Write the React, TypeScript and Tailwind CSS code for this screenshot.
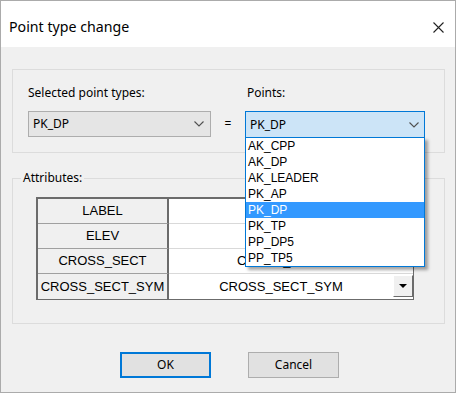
import React from "react";

const points = ["AK_CPP", "AK_DP", "AK_LEADER", "PK_AP", "PK_DP", "PK_TP", "PP_DP5", "PP_TP5"];

const rows = [
  { name: "LABEL", value: "" },
  { name: "ELEV", value: "" },
  { name: "CROSS_SECT", value: "CROSS_SECT" },
  { name: "CROSS_SECT_SYM", value: "CROSS_SECT_SYM", button: true },
];

function Chevron() {
  return (
    <svg width="10" height="6" viewBox="0 0 10 6" className="shrink-0">
      <polyline points="0.5,0.5 5,5 9.5,0.5" fill="none" stroke="#505050" strokeWidth="1.1" />
    </svg>
  );
}

export default function App() {
  return (
    <div className="w-[456px] h-[393px] border border-[#ababab] bg-[#f0f0f0] flex flex-col text-black font-['Noto_Sans',sans-serif]">
      {/* title bar */}
      <div className="h-[46px] shrink-0 bg-white flex items-center justify-between pl-[8px] pr-[11px] pt-[6px]">
        <span className="text-[14.2px]">Point type change</span>
        <svg width="11" height="11" viewBox="0 0 11 11">
          <path d="M0.5 0.5 L10.5 10.5 M10.5 0.5 L0.5 10.5" stroke="#222" strokeWidth="1.1" />
        </svg>
      </div>

      {/* type selection group */}
      <div className="ml-[11px] mt-[22px] w-[433px] h-[84px] border border-[#dcdcdc] pl-[15px] pt-[15px] flex">
        <div className="w-[183px]">
          <div className="h-[16px] leading-[16px] text-[12px]">Selected point types:</div>
          <div className="mt-[10px] h-[26px] border border-[#adadad] bg-[#e5e5e5] flex items-center justify-between pl-[4px] pr-[6px] text-[12px]">
            <span>PK_DP</span>
            <Chevron />
          </div>
        </div>
        <div className="w-[34px] flex flex-col">
          <div className="h-[26px]" />
          <div className="h-[26px] flex items-center justify-center text-[12px]">=</div>
        </div>
        <div className="w-[180px]">
          <div className="h-[16px] leading-[16px] text-[12px] pl-[2px]">Points:</div>
          <div className="relative mt-[10px]">
            <div className="h-[27px] border border-[#0078d7] bg-[#cce4f7] flex items-center justify-between pl-[4px] pr-[5px] text-[12px]">
              <span>PK_DP</span>
              <Chevron />
            </div>
            <div className="absolute left-0 top-[26px] z-10 w-[180px] border border-[#0078d7] bg-white shadow-[3px_3px_3px_rgba(0,0,0,0.35)] font-['Liberation_Sans',sans-serif] text-[12px]">
              {points.map((p) => (
                <div
                  key={p}
                  className={
                    p === "PK_DP"
                      ? "h-[16px] leading-[16px] pl-[2px] bg-[#3399ff] text-white"
                      : "h-[16px] leading-[16px] pl-[2px]"
                  }
                >
                  {p}
                </div>
              ))}
            </div>
          </div>
        </div>
      </div>

      {/* attributes group */}
      <fieldset className="ml-[11px] mt-[17px] w-[433px] h-[154px] border border-[#dcdcdc]">
        <legend className="ml-[8px] px-[2px] text-[12px] leading-[16px]">Attributes:</legend>
        <div className="ml-[23px] mt-[11px] w-[378px] border border-[#6b6b6b] border-l-2 border-t-2 font-['Liberation_Sans',sans-serif] text-[13px]">
          {rows.map((r, i) => (
            <div key={r.name} className="flex h-[25px]">
              <div
                className={
                  i < rows.length - 1
                    ? "w-[131px] flex items-center justify-center bg-[#f0f0f0] border-b border-[#a0a0a0] border-r-2 border-r-[#6b6b6b]"
                    : "w-[131px] flex items-center justify-center bg-[#f0f0f0] border-r-2 border-r-[#6b6b6b]"
                }
              >
                {r.name}
              </div>
              <div
                className={
                  i < rows.length - 1
                    ? "flex-1 flex items-center bg-white border-b border-[#d9d9d9]"
                    : "flex-1 flex items-center bg-white"
                }
              >
                <span className="flex-1 text-center">{r.value}</span>
                {r.button ? (
                  <div className="w-[20px] h-[22px] mb-[2px] bg-[#f0f0f0] border border-t-white border-l-white border-b-[#6b6b6b] border-r-[#6b6b6b] flex items-center justify-center">
                    <svg width="8" height="4" viewBox="0 0 8 4">
                      <path d="M0 0 H8 L4 4 Z" fill="#000" />
                    </svg>
                  </div>
                ) : (
                  <div className="w-[20px]" />
                )}
              </div>
            </div>
          ))}
        </div>
      </fieldset>

      {/* buttons */}
      <div className="mt-[28px] flex justify-center gap-[37px] pl-[3px] text-[12px]">
        <button className="w-[91px] h-[26px] border-2 border-[#0078d7] bg-[#e1e1e1]">OK</button>
        <button className="w-[91px] h-[26px] border border-[#adadad] bg-[#e1e1e1]">Cancel</button>
      </div>
    </div>
  );
}
